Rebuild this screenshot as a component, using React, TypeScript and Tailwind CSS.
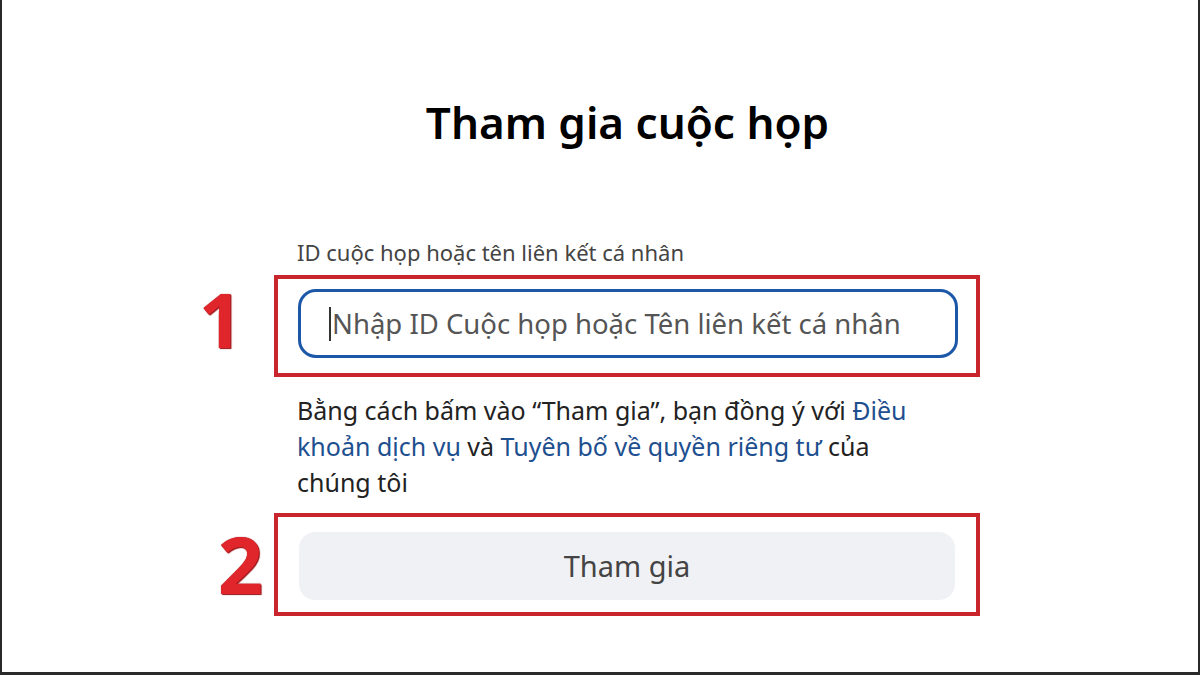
import * as React from "react";

const font = { fontFamily: '"Noto Sans", "Open Sans", sans-serif' };

function Marker({ n, className }: { n: string; className: string }) {
  return (
    <span
      aria-hidden
      className={
        "absolute font-bold leading-none text-[#e1262b] [text-shadow:0_0_1px_#8a1014,1px_1px_1px_#9a1418] " +
        className
      }
    >
      {n}
    </span>
  );
}

export default function App() {
  return (
    <div
      className="w-[1200px] h-[675px] bg-white border-l-2 border-r-2 border-b-[3px] border-[#2a2a2a] overflow-hidden"
      style={font}
    >
      <div className="ml-[295px] w-[661px] flex flex-col">
        <h1 className="mt-[92px] h-[60px] text-center text-[44px] leading-[60px] font-semibold text-black">
          Tham gia cuộc họp
        </h1>

        <label className="mt-[86px] h-[28px] text-[22px] leading-[28px] text-[#444]">
          ID cuộc họp hoặc tên liên kết cá nhân
        </label>

        {/* annotated input */}
        <div className="relative mt-[9px] -ml-[23px] -mr-[22px] h-[102px] border-4 border-[#c8262c] pt-[10px] pl-[20px] pr-[18px]">
          <Marker n="1" className="-left-[79px] top-[2px] text-[76px]" />
          <div className="h-[69px] rounded-[18px] border-[3px] border-[#1d58a8] flex items-center pl-[28px]">
            <span className="w-[2px] h-[34px] bg-[#333] mr-[1px]" />
            <span className="text-[27.5px] text-[#555] leading-none">
              Nhập ID Cuộc họp hoặc Tên liên kết cá nhân
            </span>
          </div>
        </div>

        <p className="mt-[15px] max-w-[625px] text-[25px] leading-[36px] text-[#222]">
          Bằng cách bấm vào “Tham gia”, bạn đồng ý với{" "}
          <span className="text-[#1e4f8f]">Điều khoản dịch vụ</span> và{" "}
          <span className="text-[#1e4f8f]">Tuyên bố về quyền riêng tư</span> của chúng tôi
        </p>

        {/* annotated button */}
        <div className="relative mt-[13px] -ml-[23px] -mr-[22px] h-[103px] border-4 border-[#c8262c] pt-[15px] pl-[21px] pr-[21px]">
          <Marker n="2" className="-left-[60px] top-[7px] text-[79px]" />
          <div className="h-[68px] rounded-[16px] bg-[#f0f1f4] flex items-center justify-center text-[29px] text-[#444]">
            Tham gia
          </div>
        </div>
      </div>
    </div>
  );
}
